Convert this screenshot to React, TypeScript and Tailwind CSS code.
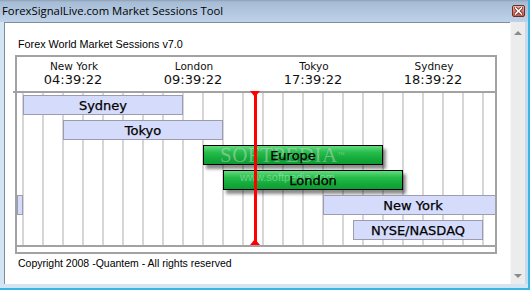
const sessions = [
  { name: "Sydney", pos: "row-start-1 col-start-2 col-span-16", green: false },
  { name: "Tokyo", pos: "row-start-2 col-start-6 col-span-16", green: false },
  { name: "Europe", pos: "row-start-3 col-start-20 col-span-18", green: true },
  { name: "London", pos: "row-start-4 col-start-22 col-span-18", green: true },
  { name: "New York", pos: "row-start-5 col-start-32 col-span-18", green: false },
  { name: "NYSE/NASDAQ", pos: "row-start-6 col-start-35 col-span-13", green: false },
]

const clocks = [
  { city: "New York", time: "04:39:22" },
  { city: "London", time: "09:39:22" },
  { city: "Tokyo", time: "17:39:22" },
  { city: "Sydney", time: "18:39:22" },
]

function CloseButton() {
  return (
    <div className="w-[13px] h-[12px] rounded-[2px] border border-[#6e2c25] bg-[linear-gradient(to_bottom,#f0b4a6,#d77a68_55%,#c45a47)] flex items-center justify-center">
      <svg width="9" height="8" viewBox="0 0 9 8">
        <path d="M1.5 1 L7.5 7 M7.5 1 L1.5 7" stroke="#6e2c25" strokeWidth="3.2" strokeLinecap="square" />
        <path d="M1.5 1 L7.5 7 M7.5 1 L1.5 7" stroke="#ffffff" strokeWidth="1.6" strokeLinecap="square" />
      </svg>
    </div>
  )
}

function SessionBar({ name, pos, green }: { name: string; pos: string; green: boolean }) {
  const look = green
    ? "border border-black bg-[linear-gradient(to_bottom,#62dc80_0%,#27bd4b_35%,#14ab3b_70%,#0e9c33_100%)] shadow-[3px_4px_3px_rgba(0,0,0,0.45)]"
    : "border border-[#9c9cae] bg-[#d5dbfb]"
  return (
    <div className={`${pos} ${look} flex items-center justify-center font-['DejaVu_Sans',sans-serif] text-[13px] leading-[15px] text-black`}>
      <span className="relative z-10 [-webkit-text-stroke:0.25px_black]">{name}</span>
    </div>
  )
}

export default function App() {
  return (
    <div className="w-[530px] h-[290px] flex flex-col bg-[#c6dbee] border-r-2 border-b-2 border-[#3ab4e4] overflow-hidden font-['Liberation_Sans',Arial,sans-serif]">
      {/* title bar */}
      <div className="h-[22px] shrink-0 flex items-center justify-between pl-[2px] pr-[3px] bg-[linear-gradient(to_bottom,#8c9fb5_0px,#a6bcd5_2px,#bed3e9_100%)]">
        <span className="font-['Open_Sans',sans-serif] text-[11.3px] leading-[16px] text-black">
          ForexSignalLive.com Market Sessions Tool
        </span>
        <CloseButton />
      </div>

      <div className="h-[262px] shrink-0 flex">
        <div className="w-[4px] bg-[#d3e4f3]" />

        {/* client area */}
        <div className="w-[506px] bg-white border-l border-t border-[#828d99] flex flex-col">
          <div className="pl-[13px] mt-[15px] text-[10.8px] leading-[13px] text-black">Forex World Market Sessions v7.0</div>

          <div className="ml-[10px] mt-[4px] w-[482px] h-[199px] border-2 border-[#a2a2a2] flex flex-col">
            {/* clocks */}
            <div className="h-[36px] shrink-0 border-b-2 border-[#a2a2a2] pt-[3px] -ml-[4px] grid grid-cols-[repeat(4,120px)] font-['DejaVu_Sans',sans-serif] text-[#111]">
              {clocks.map((c) => (
                <div key={c.city} className="flex flex-col items-center">
                  <span className="text-[10.5px] leading-[13px] translate-x-[1px]">{c.city}</span>
                  <span className="text-[13px] leading-[16px] -mt-px">{c.time}</span>
                </div>
              ))}
            </div>

            {/* timeline */}
            <div className="relative h-[152px] shrink-0">
              <div className="h-full overflow-hidden bg-[linear-gradient(to_right,#d6d6d6_0_2px,transparent_2px)] bg-[length:20px_100%] bg-[position:5px_0] bg-repeat-x">
                <div className="grid grid-cols-[6px_repeat(48,10px)] grid-rows-[repeat(6,20px)] gap-y-[5px] pt-[2px]">
                  <div className="row-start-5 col-start-1 border border-[#9c9cae] bg-[#d5dbfb]" />
                  {sessions.map((s) => (
                    <SessionBar key={s.name} {...s} />
                  ))}
                </div>
              </div>

              {/* softpedia watermark */}
              <div className="absolute left-[203px] top-[51px] font-['Liberation_Serif',serif] text-[21px] leading-[22px] tracking-[0.5px] text-white/40 [text-shadow:0_0_1px_rgba(0,0,0,0.12)]">
                SOFTPEDIA<span className="text-[7px] align-top">™</span>
              </div>
              <div className="absolute left-[223px] top-[78px] text-[11px] leading-[12px] text-white/35">
                www.softpedia.com
              </div>

              {/* current time marker */}
              <div className="absolute left-[237px] top-0 bottom-0 w-[3px] bg-[#ff0000]" />
              <div className="absolute left-[233px] -top-[2px] w-0 h-0 border-x-[5px] border-t-[6px] border-x-transparent border-t-[#ff0000]" />
              <div className="absolute left-[233px] bottom-0 w-0 h-0 border-x-[5px] border-b-[6px] border-x-transparent border-b-[#ff0000]" />
            </div>

            <div className="flex-1 border-t-2 border-[#a2a2a2]" />
          </div>

          <div className="pl-[13px] mt-[3px] text-[10.5px] leading-[13px] text-black">Copyright 2008 -Quantem - All rights reserved</div>
        </div>

        {/* scrollbar */}
        <div className="w-[15px] bg-[#ececec] border-l border-[#f6f6f6] flex flex-col items-center justify-between pt-[9px] pb-[6px]">
          <div className="w-0 h-0 border-x-[4px] border-b-[4px] border-x-transparent border-b-[#8a8a8a]" />
          <div className="w-0 h-0 border-x-[4px] border-t-[4px] border-x-transparent border-t-[#8a8a8a]" />
        </div>

        <div className="flex-1 bg-[#c6dbee]" />
      </div>

      <div className="flex-1 bg-[#d3e4f3]" />
    </div>
  )
}
